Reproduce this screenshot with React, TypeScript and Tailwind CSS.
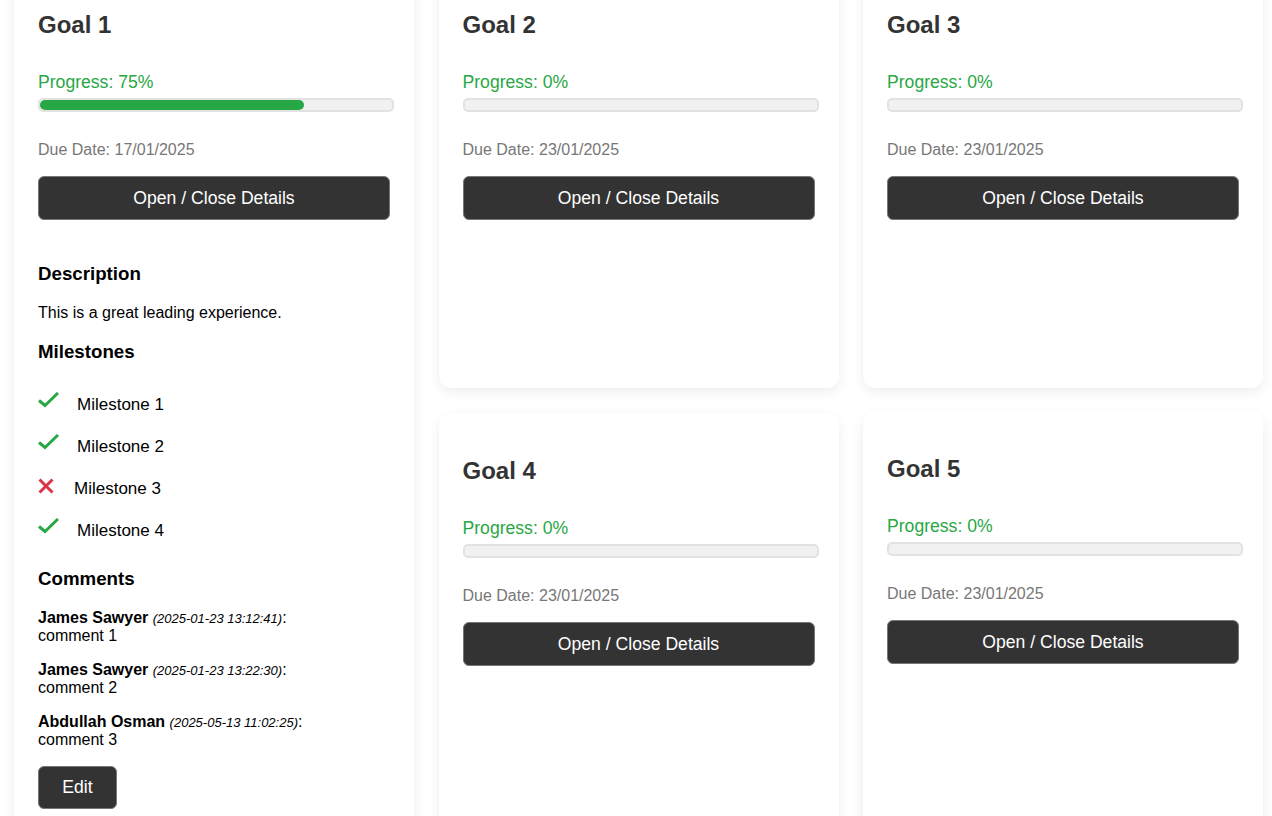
import React from 'react';

type Goal = {
  id: number;
  title: string;
  progress: number;
  due: string;
};

const goals: Goal[] = [
  { id: 1, title: 'Goal 1', progress: 75, due: '17/01/2025' },
  { id: 2, title: 'Goal 2', progress: 0, due: '23/01/2025' },
  { id: 3, title: 'Goal 3', progress: 0, due: '23/01/2025' },
  { id: 4, title: 'Goal 4', progress: 0, due: '23/01/2025' },
  { id: 5, title: 'Goal 5', progress: 0, due: '23/01/2025' },
];

const milestones = [
  { name: 'Milestone 1', done: true },
  { name: 'Milestone 2', done: true },
  { name: 'Milestone 3', done: false },
  { name: 'Milestone 4', done: true },
];

const comments = [
  { author: 'James Sawyer', time: '2025-01-23 13:12:41', text: 'comment 1' },
  { author: 'James Sawyer', time: '2025-01-23 13:22:30', text: 'comment 2' },
  { author: 'Abdullah Osman', time: '2025-05-13 11:02:25', text: 'comment 3' },
];

const CheckIcon = () => (
  <svg width="21" height="16" viewBox="0 0 21 16" className="mr-[18px] -mt-[10px] shrink-0">
    <path d="M1 8.5 L7 13.5 L20 1" fill="none" stroke="#28a745" strokeWidth="3" />
  </svg>
);

const CrossIcon = () => (
  <svg width="16" height="16" viewBox="0 0 16 16" className="mr-[20px] -mt-[6px] shrink-0">
    <path d="M1.5 1.5 L14.5 14.5 M14.5 1.5 L1.5 14.5" fill="none" stroke="#dc3545" strokeWidth="3" />
  </svg>
);

const GoalCard = ({
  goal,
  className = '',
  children,
}: {
  goal: Goal;
  className?: string;
  children?: React.ReactNode;
}) => (
  <div
    className={`bg-white rounded-xl px-6 pt-6 shadow-[0_4px_12px_rgba(0,0,0,0.07)] ${className}`}
  >
    <h2 className="mt-[20px] text-2xl font-bold leading-[28px] text-[#333]">{goal.title}</h2>
    <p className="mt-[33px] text-[17.6px] leading-[20px] text-[#28a745]">
      Progress: {goal.progress}%
    </p>
    <div className="mt-[6px] w-[356px] rounded-[5px] border-2 border-[#e2e2e2] bg-[#f1f1f1]">
      <div
        className="h-[10px] rounded-[5px] bg-[#28a745]"
        style={{ width: `${goal.progress}%` }}
      />
    </div>
    <p className="mt-[29px] text-base leading-[18px] text-[#777]">Due Date: {goal.due}</p>
    <button className="mt-[17px] flex h-[44px] w-[352px] items-center justify-center rounded-md border border-[#777] bg-[#333] text-[17.6px] text-white">
      Open / Close Details
    </button>
    {children}
  </div>
);

const Details = () => (
  <div className="text-black">
    <h3 className="mt-[43px] text-[18.72px] font-bold leading-[22px]">Description</h3>
    <p className="mt-[19px] text-base leading-[18px]">This is a great leading experience.</p>
    <h3 className="mt-[19px] text-[18.72px] font-bold leading-[22px]">Milestones</h3>
    <ul className="mt-[21px]">
      {milestones.map((m) => (
        <li key={m.name} className="flex h-[42px] items-center text-[17px]">
          {m.done ? <CheckIcon /> : <CrossIcon />}
          <span>{m.name}</span>
        </li>
      ))}
    </ul>
    <h3 className="mt-[16px] text-[18.72px] font-bold leading-[22px]">Comments</h3>
    <div className="mt-[19px] flex flex-col gap-[16px]">
      {comments.map((c) => (
        <p key={c.time} className="text-base leading-[18px]">
          <strong>{c.author}</strong>{' '}
          <em className="text-[13px] leading-none">({c.time})</em>:
          <br />
          {c.text}
        </p>
      ))}
    </div>
    <button className="mt-[17px] flex h-[43px] w-[79px] items-center justify-center rounded-md border border-[#777] bg-[#333] text-[17.6px] text-white">
      Edit
    </button>
  </div>
);

export default function App() {
  return (
    <div className="h-[816px] overflow-hidden bg-white font-['Liberation_Sans',Arial,sans-serif] leading-[normal]">
      <div className="-mt-[33px] grid grid-cols-[400px_400px_400px] auto-rows-[421px] gap-x-[24.5px] gap-y-[25px] pl-[14px]">
        <GoalCard goal={goals[0]} className="row-span-2">
          <Details />
        </GoalCard>
        <GoalCard goal={goals[1]} />
        <GoalCard goal={goals[2]} />
        <GoalCard goal={goals[3]} />
        <GoalCard
          goal={goals[4]}
          className="-translate-y-[2px] shadow-[0_6px_14px_rgba(0,0,0,0.08)]"
        />
      </div>
    </div>
  );
}
